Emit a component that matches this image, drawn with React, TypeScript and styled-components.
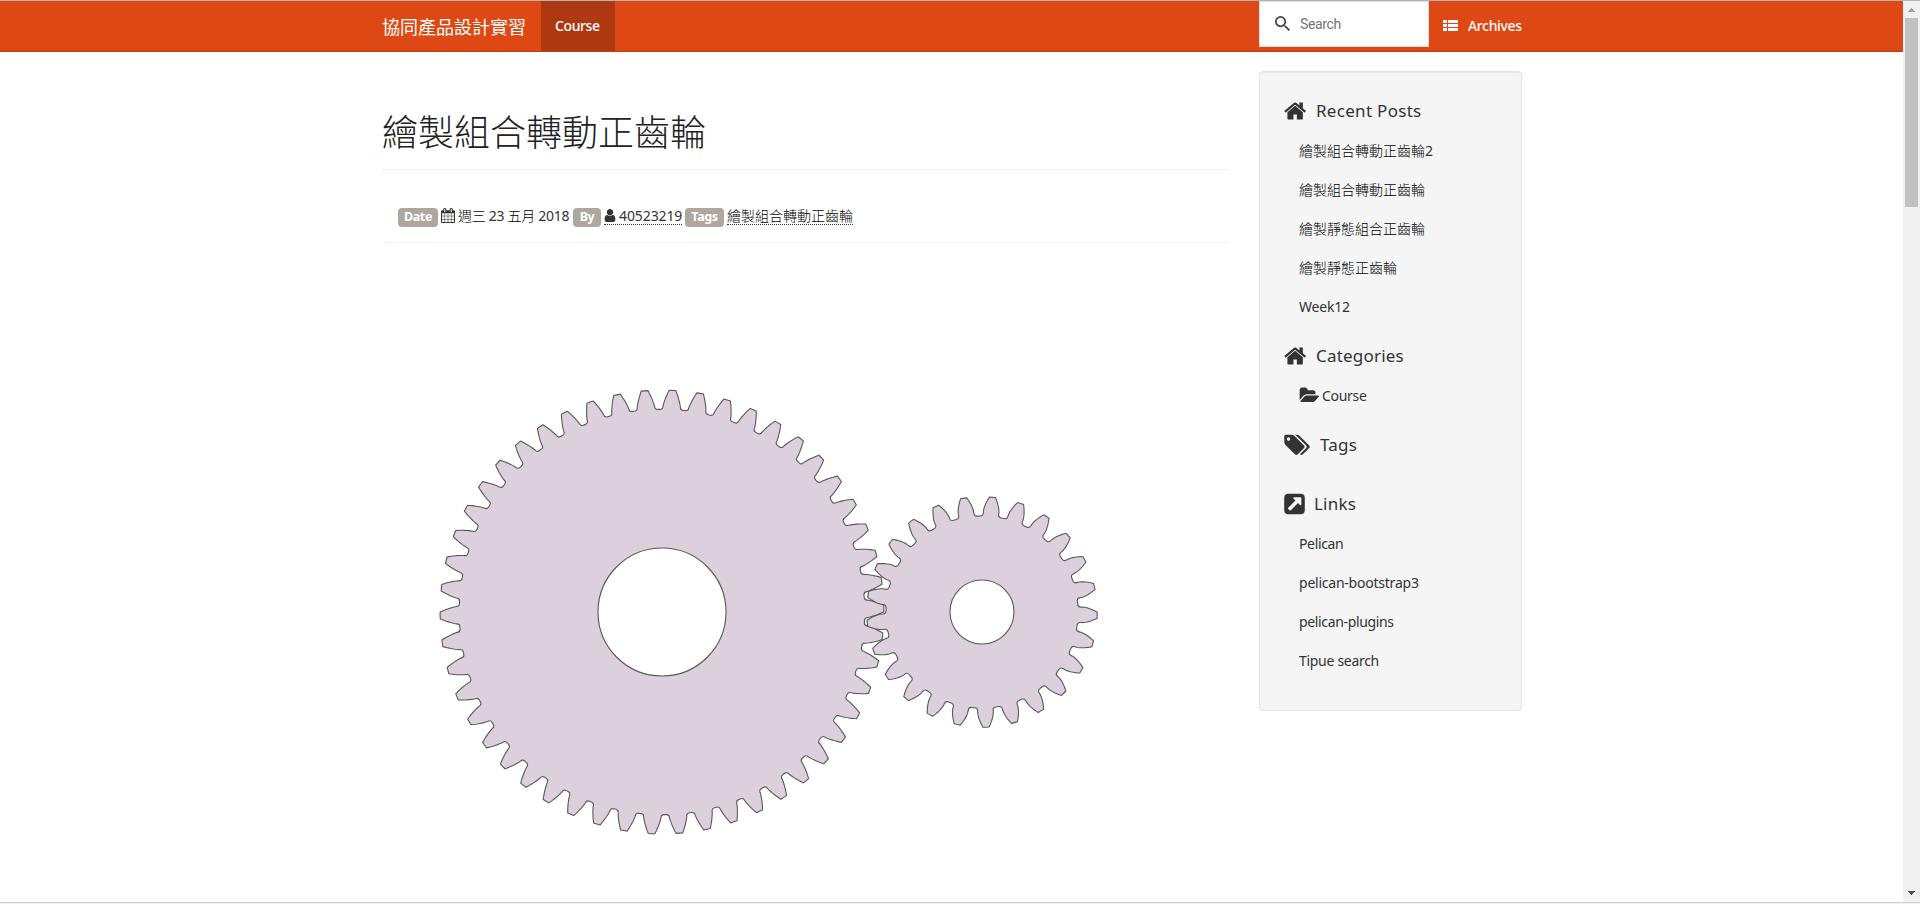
import React from "react";
import styled, { createGlobalStyle } from "styled-components";

const Global = createGlobalStyle`
  * { box-sizing: border-box; }
  body { margin: 0; background: #fff; overflow: hidden; }
  a { color: inherit; text-decoration: none; }
`;

const Screen = styled.div`
  width: 1920px;
  height: 904px;
  display: flex;
  flex-direction: column;
  border-top: 1px solid #b4b4b4;
  color: #333;
  font: 14px/20px "Noto Sans", "Noto Sans CJK TC", sans-serif;
`;
const Body = styled.div`
  flex: 1;
  min-height: 0;
  display: flex;
`;
const Page = styled.div`
  flex: 1;
  display: flex;
  flex-direction: column;
  overflow: hidden;
`;
const WindowEdge = styled.div`
  height: 2px;
  background: #f0f0f0;
  border-top: 1px solid #cfcfcf;
`;

const Txt = styled.span<{ $ls?: number; $size?: number }>`
  letter-spacing: ${(p) => p.$ls ?? 0}px;
  font-size: ${(p) => p.$size ?? 14}px;
  white-space: nowrap;
`;

const Navbar = styled.nav`
  height: 51px;
  flex: none;
  padding-left: 382px;
  display: flex;
  background: #dd4814;
  border-bottom: 1px solid #bf3e11;
  color: #fff;
`;
const Brand = styled.a`
  width: 159px;
  padding-top: 13px;
  font-size: 18px;
  line-height: 24px;
  font-weight: 400;
  font-family: "Noto Sans CJK TC", sans-serif;
  white-space: nowrap;
`;
const ActiveLink = styled.a`
  width: 74px;
  padding: 15px 0 0 14px;
  background: #ae3910;
  font-weight: 500;
`;
const SearchBox = styled.div`
  width: 170px;
  height: 46px;
  margin-left: 644px;
  padding: 0 0 1px 15px;
  display: flex;
  align-items: center;
  gap: 10px;
  background: #fff;
  border: 1px solid #ddd;
  color: #757575;
  font-family: Roboto, sans-serif;
`;
const NavLink = styled.a`
  display: flex;
  padding: 15px 0 0 14px;
  gap: 10px;
  font-weight: 500;
`;

const Columns = styled.div`
  display: flex;
  align-items: flex-start;
  padding: 19px 0 0 382px;
`;
const Article = styled.article`
  width: 847px;
  margin-right: 30px;
`;
const Title = styled.h1`
  margin: 0;
  height: 99px;
  padding-top: 34px;
  border-bottom: 1px solid #eee;
  font: 200 36px/50px "Noto Sans CJK TC", sans-serif;
  color: #222;
`;
const Meta = styled.div`
  margin-top: 20px;
  height: 53px;
  padding: 17px 15px 0;
  display: flex;
  align-items: flex-start;
  border: 1px solid #fbfbfb;
  border-top-color: #fff;
  border-bottom-color: #f3f3f3;
  border-radius: 4px;
  font-size: 14px;
`;
const Label = styled.span<{ $w: number }>`
  width: ${(p) => p.$w}px;
  height: 19px;
  margin-right: 3px;
  border-radius: 4px;
  background: #aea79f;
  color: #fff;
  font: 700 12.5px/18px "Noto Sans", sans-serif;
  letter-spacing: -0.4px;
  text-align: center;
`;
const MetaItem = styled.span<{ $w: number }>`
  width: ${(p) => p.$w}px;
  height: 17px;
  margin-right: 3px;
  display: flex;
  gap: 3px;
  line-height: 16px;
  white-space: nowrap;
`;
const DottedLink = styled(MetaItem)`
  border-bottom: 1px dotted #333;
`;
const Drawing = styled.svg`
  display: block;
  margin-top: 0;
`;

const Sidebar = styled.aside`
  width: 263px;
  height: 640px;
  padding: 18px 24px;
  background: #f5f5f5;
  border: 1px solid #e3e3e3;
  border-radius: 4px;
  box-shadow: inset 0 1px 1px rgba(0, 0, 0, 0.05);
`;
const Section = styled.section<{ $h: number }>`
  height: ${(p) => p.$h}px;
`;
const Heading = styled.h4<{ $gap: number }>`
  margin: 0;
  height: 41px;
  display: flex;
  align-items: center;
  gap: ${(p) => p.$gap}px;
  font-weight: 400;
  font-size: 17px;
`;
const List = styled.ul`
  list-style: none;
  margin: 0;
  padding: 0 0 0 15px;
`;
const Item = styled.li`
  height: 39px;
  display: flex;
  align-items: center;
  gap: 3px;
  white-space: nowrap;
`;
const Cjk = styled.span`
  font: 300 14px/14px "Noto Sans CJK TC", sans-serif;
  color: #000;
`;

const Scrollbar = styled.div`
  width: 17px;
  background: #f0f0f0;
  display: flex;
  flex-direction: column;
  align-items: center;
`;
const Thumb = styled.div`
  width: 13px;
  height: 189px;
  background: #c1c1c1;
`;
const ScrollButton = styled.svg`
  width: 17px;
  height: 17px;
  flex: none;
  &:last-child { margin-top: auto; }
`;
const Icon = styled.svg`
  flex: none;
  display: block;
  fill: currentColor;
`;

const HOME =
  "M1472 992v480q0 26-19 45t-45 19h-384v-384h-256v384h-384q-26 0-45-19t-19-45v-480q0-1 .5-3t.5-3l575-474 575 474q1 2 1 6zm223-69l-62 74q-8 9-21 11h-3q-13 0-21-7l-692-577-692 577q-12 8-24 7-13-2-21-11l-62-74q-8-10-7-23.5t11-21.5l719-599q32-26 76-26t76 26l244 204v-195q0-14 9-23t23-9h192q14 0 23 9t9 23v408l219 182q10 8 11 21.5t-7 23.5z";
const TAGS =
  "M384 448q0-53-37.5-90.5t-90.5-37.5-90.5 37.5-37.5 90.5 37.5 90.5 90.5 37.5 90.5-37.5 37.5-90.5zm1067 576q0 53-37 90l-491 492q-39 37-91 37-53 0-90-37l-715-716q-38-37-64.5-101t-26.5-117v-416q0-52 38-90t90-38h416q53 0 117 26.5t102 64.5l715 714q37 39 37 91zm384 0q0 53-37 90l-491 492q-39 37-91 37-36 0-59-14t-53-45l470-470q37-37 37-90 0-52-37-91l-715-714q-38-38-102-64.5t-117-26.5h224q53 0 117 26.5t102 64.5l715 714q37 39 37 91z";
const LINK =
  "M1408 928v-480q0-26-19-45t-45-19h-480q-42 0-59 39-17 41 14 70l144 144-534 534q-19 19-19 45t19 45l102 102q19 19 45 19t45-19l534-534 144 144q18 19 45 19 12 0 25-5 39-17 39-59zm256-512v960q0 119-84.5 203.5t-203.5 84.5h-960q-119 0-203.5-84.5t-84.5-203.5v-960q0-119 84.5-203.5t203.5-84.5h960q119 0 203.5 84.5t84.5 203.5z";
const FOLDER =
  "M1815 952q0 31-31 66l-336 396q-43 51-120.5 86.5t-143.5 35.5h-1088q-34 0-60.5-13t-26.5-43q0-31 31-66l336-396q43-51 120.5-86.5t143.5-35.5h1088q34 0 60.5 13t26.5 43zm-343-344v160h-832q-94 0-197 47.5t-164 119.5l-337 396-5 6q0-4-.5-12.5t-.5-12.5v-960q0-92 66-158t158-66h320q92 0 158 66t66 158v32h544q92 0 158 66t66 158z";
const USER =
  "M1536 1399q0 109-62.5 187t-150.5 78h-854q-88 0-150.5-78t-62.5-187q0-85 8.5-160.5t31.5-152 58.5-131 94-89 134.5-34.5q131 128 313 128t313-128q76 0 134.5 34.5t94 89 58.5 131 31.5 152 8.5 160.5zm-256-887q0 159-112.5 271.5t-271.5 112.5-271.5-112.5-112.5-271.5 112.5-271.5 271.5-112.5 271.5 112.5 112.5 271.5z";
const CALENDAR =
  "M192 1664h288v-288h-288v288zm352 0h320v-288h-320v288zm-352-352h288v-320h-288v320zm352 0h320v-320h-320v320zm-352-384h288v-288h-288v288zm736 736h320v-288h-320v288zm-384-736h320v-288h-320v288zm768 736h288v-288h-288v288zm-384-352h320v-320h-320v320zm-352-864v-288q0-13-9.5-22.5t-22.5-9.5h-64q-13 0-22.5 9.5t-9.5 22.5v288q0 13 9.5 22.5t22.5 9.5h64q13 0 22.5-9.5t9.5-22.5zm736 864h288v-320h-288v320zm-384-384h320v-288h-320v288zm384 0h288v-288h-288v288zm32-480v-288q0-13-9.5-22.5t-22.5-9.5h-64q-13 0-22.5 9.5t-9.5 22.5v288q0 13 9.5 22.5t22.5 9.5h64q13 0 22.5-9.5t9.5-22.5zm384-64v1280q0 52-38 90t-90 38h-1408q-52 0-90-38t-38-90v-1280q0-52 38-90t90-38h128v-96q0-66 47-113t113-47h64q66 0 113 47t47 113v96h384v-96q0-66 47-113t113-47h64q66 0 113 47t47 113v96h128q52 0 90 38t38 90z";
const SEARCH =
  "M15.5 14h-.79l-.28-.27A6.471 6.471 0 0 0 16 9.5 6.5 6.5 0 1 0 9.5 16c1.61 0 3.09-.59 4.23-1.57l.27.28v.79l5 4.99L20.49 19l-4.99-5zm-6 0C7.01 14 5 11.99 5 9.5S7.01 5 9.5 5 14 7.01 14 9.5 11.99 14 9.5 14z";

/* Spur gear outline: involute flanks, 20 degree pressure angle, filleted roots. */
function gearPath(cx: number, cy: number, teeth: number, module: number, phaseDeg: number) {
  const r = (teeth * module) / 2;
  const rb = r * Math.cos((20 * Math.PI) / 180);
  const ra = r + module;
  const rr = r - 1.25 * module;
  const fillet = 0.375 * module;
  const inv = (q: number) => {
    const a = Math.acos(Math.min(1, rb / q));
    return Math.tan(a) - a;
  };
  const half = (q: number) => Math.PI / (2 * teeth) + inv(r) - inv(Math.max(q, rb));
  const rf = Math.sqrt((rr + fillet) ** 2 - fillet ** 2);
  const rootHalf = half(rf) + Math.atan(fillet / (fillet + rr));
  const start = Math.max(rf, rb);
  const at = (q: number, a: number) =>
    `${(cx + q * Math.sin(a)).toFixed(2)} ${(cy - q * Math.cos(a)).toFixed(2)}`;
  let d = "";
  for (let i = 0; i < teeth; i++) {
    const c = (phaseDeg * Math.PI) / 180 + (i * 2 * Math.PI) / teeth;
    d += (i ? `A${rr} ${rr} 0 0 1 ` : "M") + at(rr, c - rootHalf);
    d += `A${fillet} ${fillet} 0 0 0 ${at(rf, c - half(rf))}`;
    for (let k = 0; k <= 8; k++) {
      const q = start + ((ra - start) * k) / 8;
      d += `L${at(q, c - half(q))}`;
    }
    d += `A${ra} ${ra} 0 0 1 ${at(ra, c + half(ra))}`;
    for (let k = 8; k >= 0; k--) {
      const q = start + ((ra - start) * k) / 8;
      d += `L${at(q, c + half(q))}`;
    }
    d += `L${at(rf, c + half(rf))}A${fillet} ${fillet} 0 0 0 ${at(rr, c + rootHalf)}`;
  }
  return d + "Z";
}

function Gear(p: { cx: number; cy: number; teeth: number; hole: number; phase: number }) {
  const h = p.hole;
  const bore = `M${p.cx + h} ${p.cy}a${h} ${h} 0 1 0 ${-2 * h} 0a${h} ${h} 0 1 0 ${2 * h} 0Z`;
  return (
    <path
      d={gearPath(p.cx, p.cy, p.teeth, 640 / 75, p.phase) + bore}
      fill="#dcd0dd"
      fillRule="evenodd"
      stroke="#585858"
      strokeWidth="1.1"
    />
  );
}

const posts = ["繪製組合轉動正齒輪", "繪製靜態組合正齒輪", "繪製靜態正齒輪"];
const links: [string, number][] = [
  ["Pelican", -0.35],
  ["pelican-bootstrap3", -0.23],
  ["pelican-plugins", -0.35],
  ["Tipue search", -0.3],
];

export default function App() {
  return (
    <Screen>
      <Global />
      <Body>
        <Page>
          <Navbar>
            <Brand>協同產品設計實習</Brand>
            <ActiveLink><Txt $ls={-0.4}>Course</Txt></ActiveLink>
            <SearchBox>
              <Icon width="15" height="15" viewBox="3 3 17.5 17.5" color="#444"><path d={SEARCH} /></Icon>
              <Txt $ls={-0.35}>Search</Txt>
            </SearchBox>
            <NavLink>
              <Icon width="15" height="20" viewBox="0 0 15 20">
                <path d="M0 4h4v3h-4zM5 4h10v3h-10zM0 8h4v3h-4zM5 8h10v3h-10zM0 12h4v3h-4zM5 12h10v3h-10z" />
              </Icon>
              <Txt $ls={-0.35}>Archives</Txt>
            </NavLink>
          </Navbar>
          <Columns>
            <Article>
              <Title>繪製組合轉動正齒輪</Title>
              <Meta>
                <Label $w={40}>Date</Label>
                <MetaItem $w={129}>
                  <Icon width="14" height="15" viewBox="64 0 1664 1792"><path d={CALENDAR} /></Icon>
                  <Txt $ls={-0.3}><Cjk>週三</Cjk> 23 <Cjk>五月</Cjk> 2018</Txt>
                </MetaItem>
                <Label $w={28}>By</Label>
                <DottedLink $w={78}>
                  <Icon width="12" height="15" viewBox="256 0 1280 1792"><path d={USER} /></Icon>
                  <Txt $ls={-0.1}>40523219</Txt>
                </DottedLink>
                <Label $w={39}>Tags</Label>
                <DottedLink $w={126}><Txt><Cjk>繪製組合轉動正齒輪</Cjk></Txt></DottedLink>
              </Meta>
              <Drawing width="847" height="620" viewBox="382 243 847 620">
                <Gear cx={662} cy={612} teeth={50} hole={64} phase={2.7} />
                <Gear cx={982} cy={612} teeth={25} hole={32} phase={5.22} />
              </Drawing>
            </Article>
            <Sidebar>
              <Section $h={245}>
                <Heading $gap={9}>
                  <Icon width="23" height="24" viewBox="64 0 1716 1792"><path d={HOME} /></Icon>
                  <Txt $size={17} $ls={0.3}>Recent Posts</Txt>
                </Heading>
                <List>
                  <Item><Txt><Cjk>繪製組合轉動正齒輪</Cjk>2</Txt></Item>
                  {posts.map((t) => <Item key={t}><Txt><Cjk>{t}</Cjk></Txt></Item>)}
                  <Item><Txt $ls={-0.2}>Week12</Txt></Item>
                </List>
              </Section>
              <Section $h={89}>
                <Heading $gap={9}>
                  <Icon width="23" height="24" viewBox="64 0 1716 1792"><path d={HOME} /></Icon>
                  <Txt $size={17} $ls={0.2}>Categories</Txt>
                </Heading>
                <List>
                  <Item>
                    <Icon width="20" height="19" viewBox="-128 0 1944 1792"><path d={FOLDER} /></Icon>
                    <Txt $ls={-0.3}>Course</Txt>
                  </Item>
                </List>
              </Section>
              <Section $h={59}>
                <Heading $gap={10}>
                  <Icon width="26" height="24" viewBox="-64 0 1900 1792"><path d={TAGS} /></Icon>
                  <Txt $size={17} $ls={0.2}>Tags</Txt>
                </Heading>
              </Section>
              <Section $h={200}>
                <Heading $gap={9}>
                  <Icon width="21" height="24" viewBox="128 0 1536 1792"><path d={LINK} /></Icon>
                  <Txt $size={17} $ls={0.2}>Links</Txt>
                </Heading>
                <List>
                  {links.map(([t, ls]) => <Item key={t}><Txt $ls={ls}>{t}</Txt></Item>)}
                </List>
              </Section>
            </Sidebar>
          </Columns>
        </Page>
        <Scrollbar>
          <ScrollButton viewBox="0 0 17 17" shapeRendering="crispEdges">
            <path d="M8 7h1v1h1v1h1v1h1v1h-7v-1h1v-1h1v-1h1z" fill="#a3a3a3" />
          </ScrollButton>
          <Thumb />
          <ScrollButton viewBox="0 0 17 17" shapeRendering="crispEdges">
            <path d="M5 6h7v1h-1v1h-1v1h-1v1h-1v-1h-1v-1h-1v-1h-1z" fill="#505050" />
          </ScrollButton>
        </Scrollbar>
      </Body>
      <WindowEdge />
    </Screen>
  );
}
